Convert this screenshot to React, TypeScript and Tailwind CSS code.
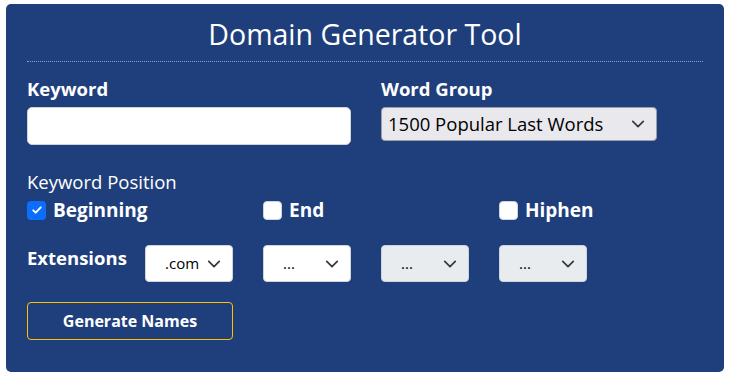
import React from 'react';

function Chevron() {
  return (
    <svg className="pointer-events-none absolute right-3 top-1/2 -translate-y-1/2" width="14" height="14" viewBox="0 0 16 16" fill="none">
      <path d="M2 5l6 6 6-6" stroke="#343a40" strokeWidth="2" strokeLinecap="round" strokeLinejoin="round" />
    </svg>
  );
}

function ExtSelect({ value, gray }: { value: string; gray?: boolean }) {
  return (
    <div className="relative w-[88px]">
      <select
        defaultValue={value}
        className={
          'h-[37px] w-full appearance-none rounded border border-[#ced4da] pl-[19px] text-[15px] text-black outline-none ' +
          (gray ? 'bg-[#e9ecef]' : 'bg-white')
        }
      >
        <option>{value}</option>
      </select>
      <Chevron />
    </div>
  );
}

function Check({ label, checked }: { label: string; checked?: boolean }) {
  return (
    <label className="flex items-center gap-[7px] text-[19px] font-bold leading-[26px] text-white">
      {checked ? (
        <span className="flex h-[19px] w-[19px] items-center justify-center rounded-[4px] bg-[#0d6efd]">
          <svg width="12" height="12" viewBox="0 0 16 16" fill="none">
            <path d="M3 8.5l3.2 3L13 4.5" stroke="white" strokeWidth="2.6" strokeLinecap="round" strokeLinejoin="round" />
          </svg>
        </span>
      ) : (
        <span className="h-[19px] w-[19px] rounded-[4px] border border-[#ced4da] bg-white" />
      )}
      {label}
    </label>
  );
}

export default function App() {
  const font = { fontFamily: '"Open Sans", "Noto Sans", sans-serif' };
  return (
    <div className="min-h-[378px] bg-white px-[6px] pt-[4px]" style={font}>
      <div className="rounded-[5px] bg-[#1f3f7c] px-[21px] pb-[32px] pt-[12px]">
        {/* Title */}
        <h1 className="text-center text-[28.5px] font-normal leading-[36px] text-white">Domain Generator Tool</h1>
        <div className="mt-[9px] border-t border-dotted border-[#8aa0c8]" />

        {/* Keyword / Word Group */}
        <div className="mt-[14px] flex">
          <div className="w-[354px]">
            <div className="text-[18.5px] font-bold leading-[26px] text-white">Keyword</div>
            <input className="mt-[5px] h-[38px] w-[324px] rounded-[5px] border border-[#ced4da] bg-white outline-none" />
          </div>
          <div>
            <div className="text-[18.5px] font-bold leading-[26px] text-white">Word Group</div>
            <div className="relative mt-[5px] w-[276px]">
              <select className="h-[34px] w-full appearance-none rounded-[4px] border border-[#9aa0a8] bg-[#e9e9ed] pl-[6px] text-[18.5px] text-black outline-none">
                <option>1500 Popular Last Words</option>
              </select>
              <Chevron />
            </div>
          </div>
        </div>

        {/* Keyword Position */}
        <div className="mt-[25px] text-[18.5px] leading-[24px] text-white">Keyword Position</div>
        <div className="mt-[3px] grid grid-cols-[236px_236px_1fr]">
          <Check label="Beginning" checked />
          <Check label="End" />
          <Check label="Hiphen" />
        </div>

        {/* Extensions */}
        <div className="mt-[22px] flex items-start">
          <div className="w-[118px] pt-[1px] text-[18.5px] font-bold leading-[24px] text-white">Extensions</div>
          <div className="flex gap-[30px]">
            <ExtSelect value=".com" />
            <ExtSelect value="..." />
            <ExtSelect value="..." gray />
            <ExtSelect value="..." gray />
          </div>
        </div>

        <button className="mt-[20px] h-[38px] w-[206px] rounded-[4px] border border-[#ffc107] text-[16px] font-bold text-white">
          Generate Names
        </button>
      </div>
    </div>
  );
}
